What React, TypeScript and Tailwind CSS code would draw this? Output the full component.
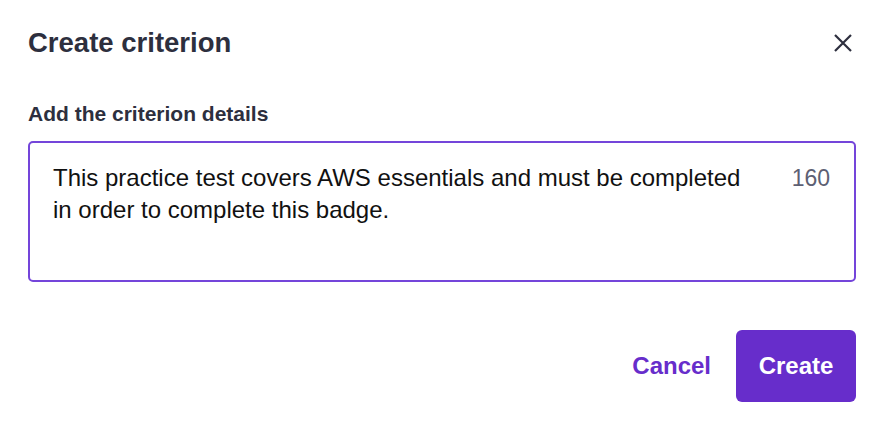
import React, { useState } from 'react';

const App: React.FC = () => {
	const [text, setText] = useState(
		'This practice test covers AWS essentials and must be completed in order to complete this badge.'
	);

	const moveCaretToEnd = (e: React.FocusEvent<HTMLTextAreaElement>) => {
		const len = e.target.value.length;
		e.target.setSelectionRange(len, len);
	};

	return (
		<div className="w-[886px] h-[430px] bg-white text-[#2d2f3e] font-['Liberation_Sans',Arial,sans-serif] pl-7 pr-[30px] pt-[26px]">
			<div className="flex items-center justify-between h-[34px]">
				<h1 className="text-[27.5px] leading-[34px] font-bold">Create criterion</h1>
				<button className="w-[22px] h-[22px] flex items-center justify-center mr-[2px]" aria-label="Close">
					<svg width="20" height="20" viewBox="0 0 20 20" fill="none" stroke="#2d2f3e" strokeWidth="2.2">
						<path d="M2 2l16 16M18 2L2 18" />
					</svg>
				</button>
			</div>

			<label className="block mt-[40px] text-[21px] leading-[28px] font-bold">
				Add the criterion details
			</label>

			<div className="relative mt-[13px] h-[141px] border-2 border-[#7445da] rounded-[5px]">
				<textarea
					autoFocus
					onFocus={moveCaretToEnd}
					value={text}
					onChange={(e) => setText(e.target.value)}
					className="w-full h-full resize-none outline-none bg-transparent pl-[23px] pr-[100px] pt-[19px] text-[24px] leading-[32px] text-[#111111] caret-black"
				/>
				<span className="absolute right-[24px] top-[19px] text-[23px] leading-[32px] text-[#5d5f73]">
					{160 - text.length + 95}
				</span>
			</div>

			<div className="flex items-center justify-end gap-[25px] mt-[48px]">
				<button className="text-[24px] font-bold text-[#672dcb]">Cancel</button>
				<button className="h-[72px] w-[120px] rounded-[6px] bg-[#672dcb] text-white text-[24px] font-bold">
					Create
				</button>
			</div>
		</div>
	);
};

export default App;
